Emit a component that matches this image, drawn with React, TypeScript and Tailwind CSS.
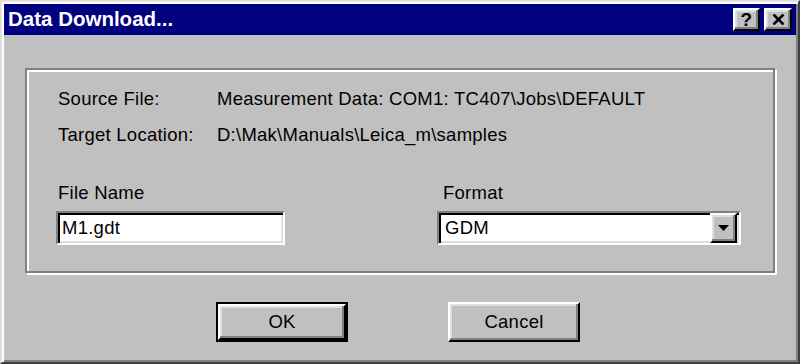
import React from 'react';

// bevels used by the classic dialog controls
const raised =
  'border-2 border-t-white border-l-white border-r-black border-b-black shadow-[inset_-2px_-2px_#808080,inset_2px_2px_#dfdfdf]';
const sunken =
  'border-2 border-t-[#808080] border-l-[#808080] border-r-white border-b-white shadow-[inset_2px_2px_#000,inset_-2px_-2px_#dfdfdf]';

const TitleButton: React.FC<{ wide?: boolean; children: React.ReactNode }> = ({ wide, children }) => (
  <div className={`${raised} bg-[#c0c0c0] h-[23px] ${wide ? 'w-[28px]' : 'w-[27px]'} flex items-center justify-center`}>
    {children}
  </div>
);

const InfoRow: React.FC<{ label: string; value: string }> = ({ label, value }) => (
  <>
    <div>{label}</div>
    <div>{value}</div>
  </>
);

export default function App() {
  return (
    <div className="w-[800px] h-[364px] bg-[#c0c0c0] border-2 border-t-[#dfdfdf] border-l-[#dfdfdf] border-r-[#404040] border-b-[#404040] shadow-[inset_2px_2px_#fff,inset_-2px_-2px_#808080] p-[2px] flex flex-col font-['Liberation_Sans',Arial,sans-serif] text-black text-[18.5px] tracking-[0.25px]">
      {/* title bar */}
      <div className="h-[31px] shrink-0 bg-[#000080] flex items-center px-[4px]">
        <span className="text-white font-bold text-[20.5px] leading-none tracking-normal">Data Download...</span>
        <div className="ml-auto flex items-center gap-[4px]">
          <TitleButton>
            <span className="font-bold text-[19px] leading-none -mt-[1px]">?</span>
          </TitleButton>
          <TitleButton wide>
            <svg width="13" height="11" viewBox="0 0 13 11" className="-mt-[1px]">
              <path d="M1.5 0.5 L11.5 10.5 M11.5 0.5 L1.5 10.5" stroke="#000" strokeWidth="2.6" fill="none" />
            </svg>
          </TitleButton>
        </div>
      </div>

      {/* body */}
      <div className="flex-1 flex flex-col pl-[21px]">
        <div className="mt-[33px] w-[750px] h-[205px] border-2 border-[#808080] shadow-[inset_2px_2px_#fff,2px_2px_#fff] pt-[11px]">
          <div className="pl-[31px] grid grid-cols-[159px_1fr] leading-[36px]">
            <InfoRow label="Source File:" value="Measurement Data: COM1: TC407\Jobs\DEFAULT" />
            <InfoRow label="Target Location:" value="D:\Mak\Manuals\Leica_m\samples" />
          </div>

          <div className="mt-[28px] pl-[29px] flex">
            <div className="w-[381px]">
              <div className="pl-[2px] leading-[24px]">File Name</div>
              <div className={`${sunken} mt-[6px] w-[229px] h-[34px] bg-white flex items-center pl-[4px]`}>
                M1.gdt
              </div>
            </div>
            <div>
              <div className="pl-[6px] leading-[24px]">Format</div>
              <div className={`${sunken} mt-[6px] w-[304px] h-[34px] bg-white flex items-stretch`}>
                <div className="flex-1 flex items-center pl-[6px]">GDM</div>
                <div className={`${raised} bg-[#c0c0c0] w-[27px] mr-[2px] flex items-center justify-center`}>
                  <svg width="11" height="6" viewBox="0 0 11 6">
                    <path d="M0 0 H11 L5.5 6 Z" fill="#000" />
                  </svg>
                </div>
              </div>
            </div>
          </div>
        </div>

        {/* action buttons */}
        <div className="mt-[29px] pl-[191px] flex gap-[100px]">
          <div className="w-[132px] h-[40px] border-2 border-black">
            <div className={`${raised} bg-[#c0c0c0] w-full h-full flex items-center justify-center`}>OK</div>
          </div>
          <div className={`${raised} bg-[#c0c0c0] w-[132px] h-[40px] flex items-center justify-center`}>Cancel</div>
        </div>
      </div>
    </div>
  );
}
